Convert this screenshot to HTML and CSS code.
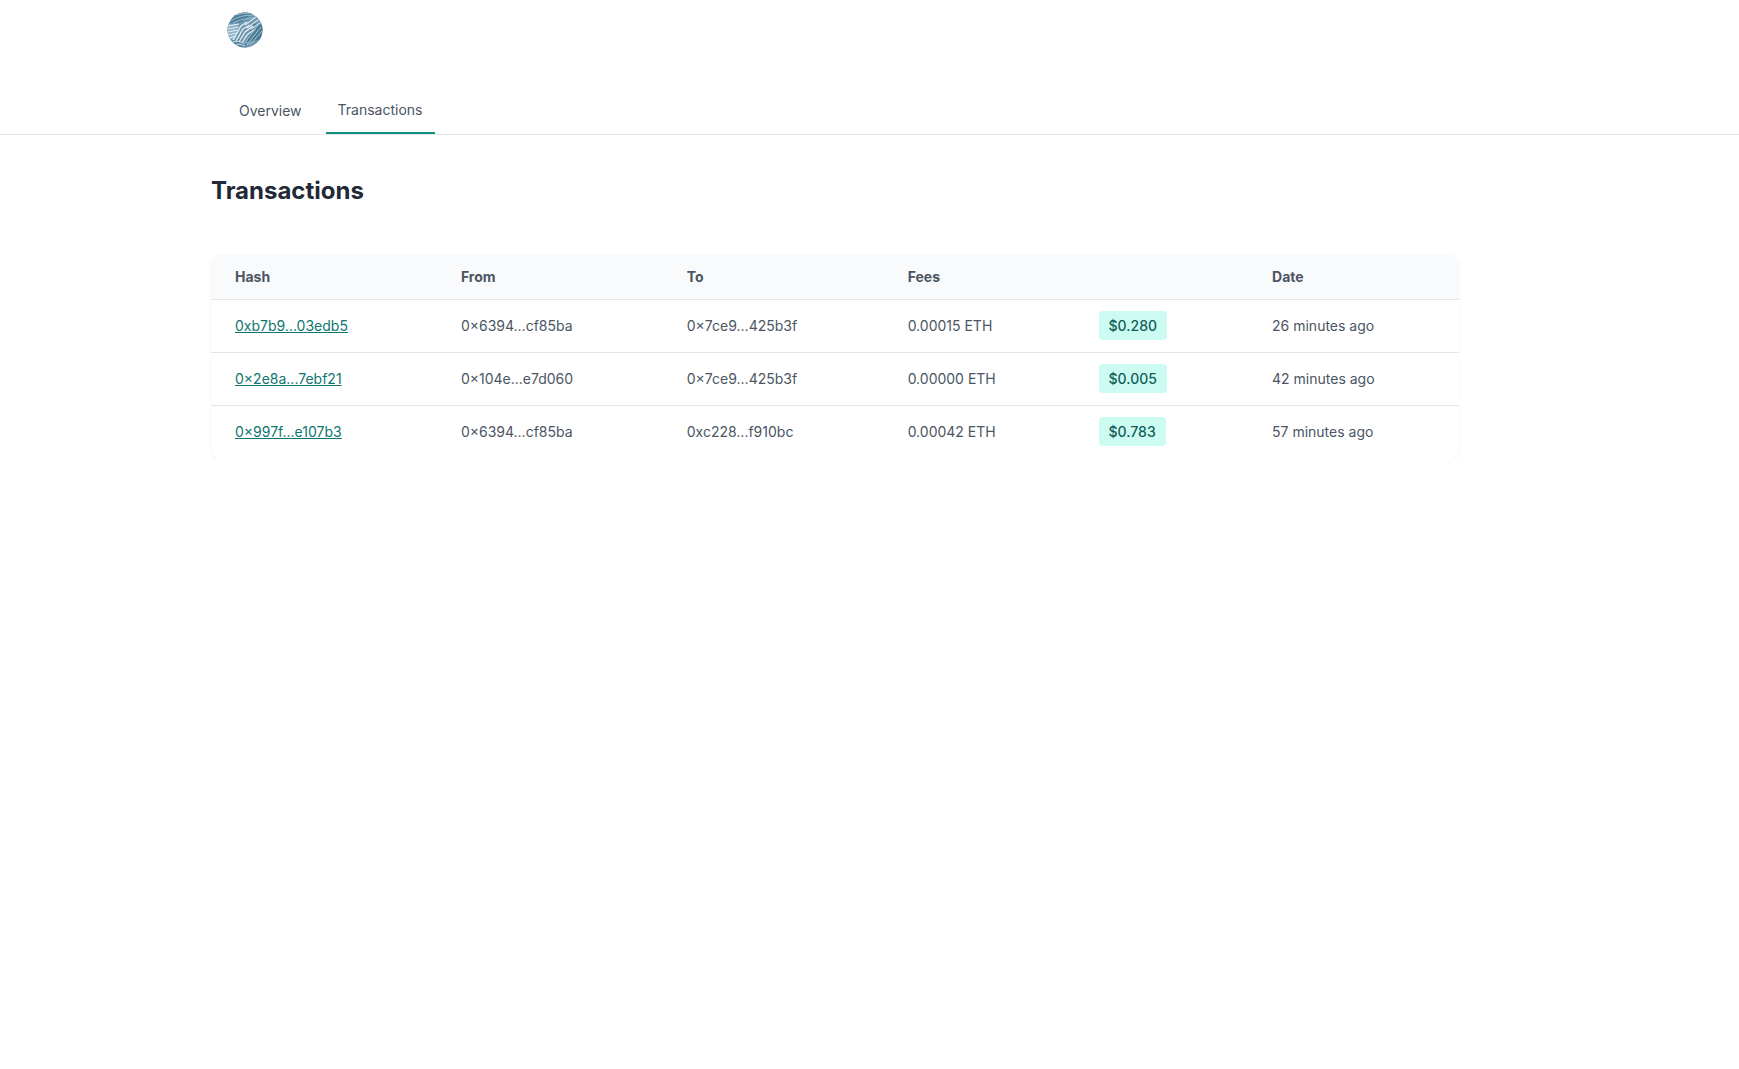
FILE: index.html
```html
<!DOCTYPE html>
<html lang="en">
<head>
<meta charset="utf-8">
<meta name="viewport" content="width=device-width, initial-scale=1">
<title>Transactions</title>
<link rel="stylesheet" href="styles.css">
</head>
<body>
<header class="site-header">
  <div class="header-inner">
    <a class="logo" href="#" aria-label="Home">
      <svg width="36" height="36" viewBox="0 0 36 36" fill="none">
        <defs><clipPath id="disc"><circle cx="18" cy="18" r="17.5"/></clipPath></defs>
        <g clip-path="url(#disc)">
          <rect width="36" height="36" fill="#6f97ae"/>
          <path d="M5 0H28L14 10L3 11Z" fill="#4a7d9b"/>
          <path d="M26 11L36 13V27L20 30Z" fill="#4a7a96"/>
          <path d="M4 27L18 27L20 36H8Z" fill="#5b89a3"/>
          <path d="M0 12L11 12L8 28L0 27Z" fill="#8fb3c6"/>
          <path d="M4 9Q12 3 27 3M6 11Q15 6 28 6M9 3Q15 1 23 1" stroke="#9dbfce"/>
          <path d="M29 5L18 13M31 8L20 16M33 11L24 17" stroke="#d7e5eb" stroke-width="1.2"/>
          <path d="M1 14L12 12M1 17L12 15M1 20L11 18M1 23L10 21M2 26L9 24" stroke="#e4eff3"/>
          <path d="M6 28L14 14L20 10M9 29L16 17L23 13M12 30L18 20L26 14M15 31L20 23L28 17" stroke="#e6f0f3" stroke-width="1.3"/>
          <path d="M17 32L23 24L31 13M20 33L26 25L34 15M23 33L29 26L35 19" stroke="#a9c6d4"/>
          <path d="M5 30Q11 28 17 31M8 33Q13 31 18 34" stroke="#c4d9e2"/>
        </g>
      </svg>
    </a>
    <nav class="tabs" aria-label="Main">
      <a class="tab" href="#">Overview</a>
      <a class="tab tab-active" href="#" aria-current="page">Transactions</a>
    </nav>
  </div>
</header>
<main class="content">
  <h1 class="title">Transactions</h1>
  <div class="card">
    <table class="table">
      <colgroup><col class="col-hash"><col class="col-from"><col class="col-to"><col class="col-fees"><col class="col-usd"><col></colgroup>
      <thead>
        <tr><th scope="col">Hash</th><th scope="col">From</th><th scope="col">To</th><th scope="col">Fees</th><td></td><th scope="col">Date</th></tr>
      </thead>
      <tbody>
        <tr><td><a class="hash" href="#">0xb7b9...03edb5</a></td><td>0×6394...cf85ba</td><td>0×7ce9...425b3f</td><td>0.00015 ETH</td><td><span class="badge">$0.280</span></td><td>26 minutes ago</td></tr>
        <tr><td><a class="hash" href="#">0×2e8a...7ebf21</a></td><td>0×104e...e7d060</td><td>0×7ce9...425b3f</td><td>0.00000 ETH</td><td><span class="badge">$0.005</span></td><td>42 minutes ago</td></tr>
        <tr><td><a class="hash" href="#">0×997f...e107b3</a></td><td>0×6394...cf85ba</td><td>0xc228...f910bc</td><td>0.00042 ETH</td><td><span class="badge">$0.783</span></td><td>57 minutes ago</td></tr>
      </tbody>
    </table>
  </div>
</main>
</body>
</html>
```
FILE: styles.css
```css
*, *::before, *::after { box-sizing: border-box; }

body {
  margin: 0;
  background: #fff;
  color: #4b5563;
  font: 14px/20px Inter, "Liberation Sans", sans-serif;
}

.site-header { border-bottom: 1px solid #e5e7eb; }

.header-inner,
.content {
  width: 76%;
  max-width: 1248px;
  margin-left: 211px;
}

.header-inner { padding: 12px 16px 0; }

.logo { display: block; width: 36px; height: 36px; }
.logo svg { display: block; }

.tabs { display: flex; align-items: center; gap: 12px; margin-top: 40px; }

.tab { padding: 12px; color: #4b5563; text-decoration: none; }
.tab-active { border-bottom: 2px solid #0d9080; }

.content { padding-top: 40px; }

.title {
  margin: 0 0 48px;
  color: #1f2937;
  font-size: 24px;
  line-height: 32px;
  font-weight: 700;
}

.card {
  overflow: hidden;
  border-radius: 8px;
  box-shadow: 0 1px 3px rgb(0 0 0 / 4%), 0 1px 2px rgb(0 0 0 / 4%);
}

.table {
  width: 100%;
  table-layout: fixed;
  border-collapse: separate;
  border-spacing: 0;
  white-space: nowrap;
}

.col-hash { width: 18.1%; }
.col-from { width: 18.1%; }
.col-to { width: 17.7%; }
.col-fees { width: 15.3%; }
.col-usd { width: 13.9%; }

.table th,
.table td { padding: 16px 24px; text-align: left; }

.table thead th,
.table thead td {
  padding-block: 12px;
  background: #f9fafb;
  font-weight: 700;
}

.table thead th,
.table thead td,
.table tbody tr:not(:last-child) td { border-bottom: 1px solid #e2e5e9; }

.table .hash { color: #0f766e; }

.badge {
  padding: 6px 10px;
  border-radius: 4px;
  background: #ccfbf1;
  color: #115e59;
  font-weight: 500;
}
```
